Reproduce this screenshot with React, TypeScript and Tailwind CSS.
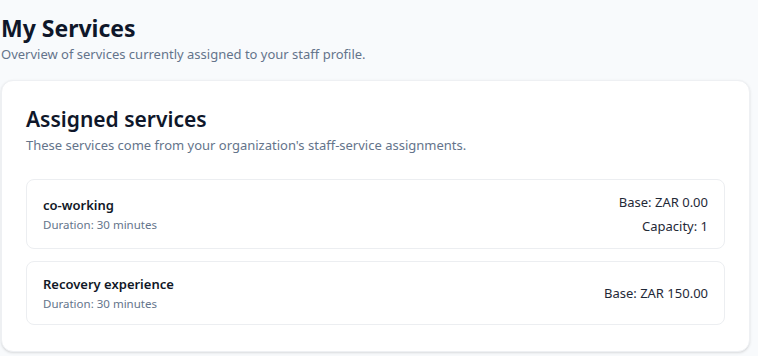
import React from 'react';

type Service = {
  name: string;
  duration: string;
  base: string;
  capacity?: number;
};

const services: Service[] = [
  { name: 'co-working', duration: '30 minutes', base: 'ZAR 0.00', capacity: 1 },
  { name: 'Recovery experience', duration: '30 minutes', base: 'ZAR 150.00' },
];

const App: React.FC = () => {
  return (
    <div
      className="min-h-screen bg-[#f8fafc] pl-px pr-2 pt-3 pb-1"
      style={{ fontFamily: '"Noto Sans", "Open Sans", sans-serif' }}
    >
      {/* Page header */}
      <div className="mb-4">
        <h1 className="text-[23px] leading-8 font-bold text-[#0f172a]">My Services</h1>
        <p className="text-[13px] leading-5 text-[#64748b]">
          Overview of services currently assigned to your staff profile.
        </p>
      </div>

      {/* Assigned services card */}
      <div className="rounded-xl border border-[#eef0f3] bg-white p-6 pb-[26px] shadow-sm">
        <h2 className="text-[21px] leading-7 font-semibold text-[#0f172a]">Assigned services</h2>
        <p className="mt-0.5 text-[13px] leading-5 text-[#64748b]">
          These services come from your organization's staff-service assignments.
        </p>

        <div className="mt-6 flex flex-col gap-3">
          {services.map((s) => (
            <div
              key={s.name}
              className="flex items-center justify-between rounded-lg border border-[#eceef1] px-4 py-3"
            >
              <div className="flex flex-col gap-0.5">
                <span className="text-[13px] leading-5 font-semibold text-[#111827]">{s.name}</span>
                <span className="text-[11.5px] leading-4 text-[#64748b]">Duration: {s.duration}</span>
              </div>
              <div className="flex flex-col items-end gap-1 text-[13px] leading-5 text-[#1f2937]">
                <span>Base: {s.base}</span>
                {s.capacity !== undefined && <span>Capacity: {s.capacity}</span>}
              </div>
            </div>
          ))}
        </div>
      </div>
    </div>
  );
};

export default App;
